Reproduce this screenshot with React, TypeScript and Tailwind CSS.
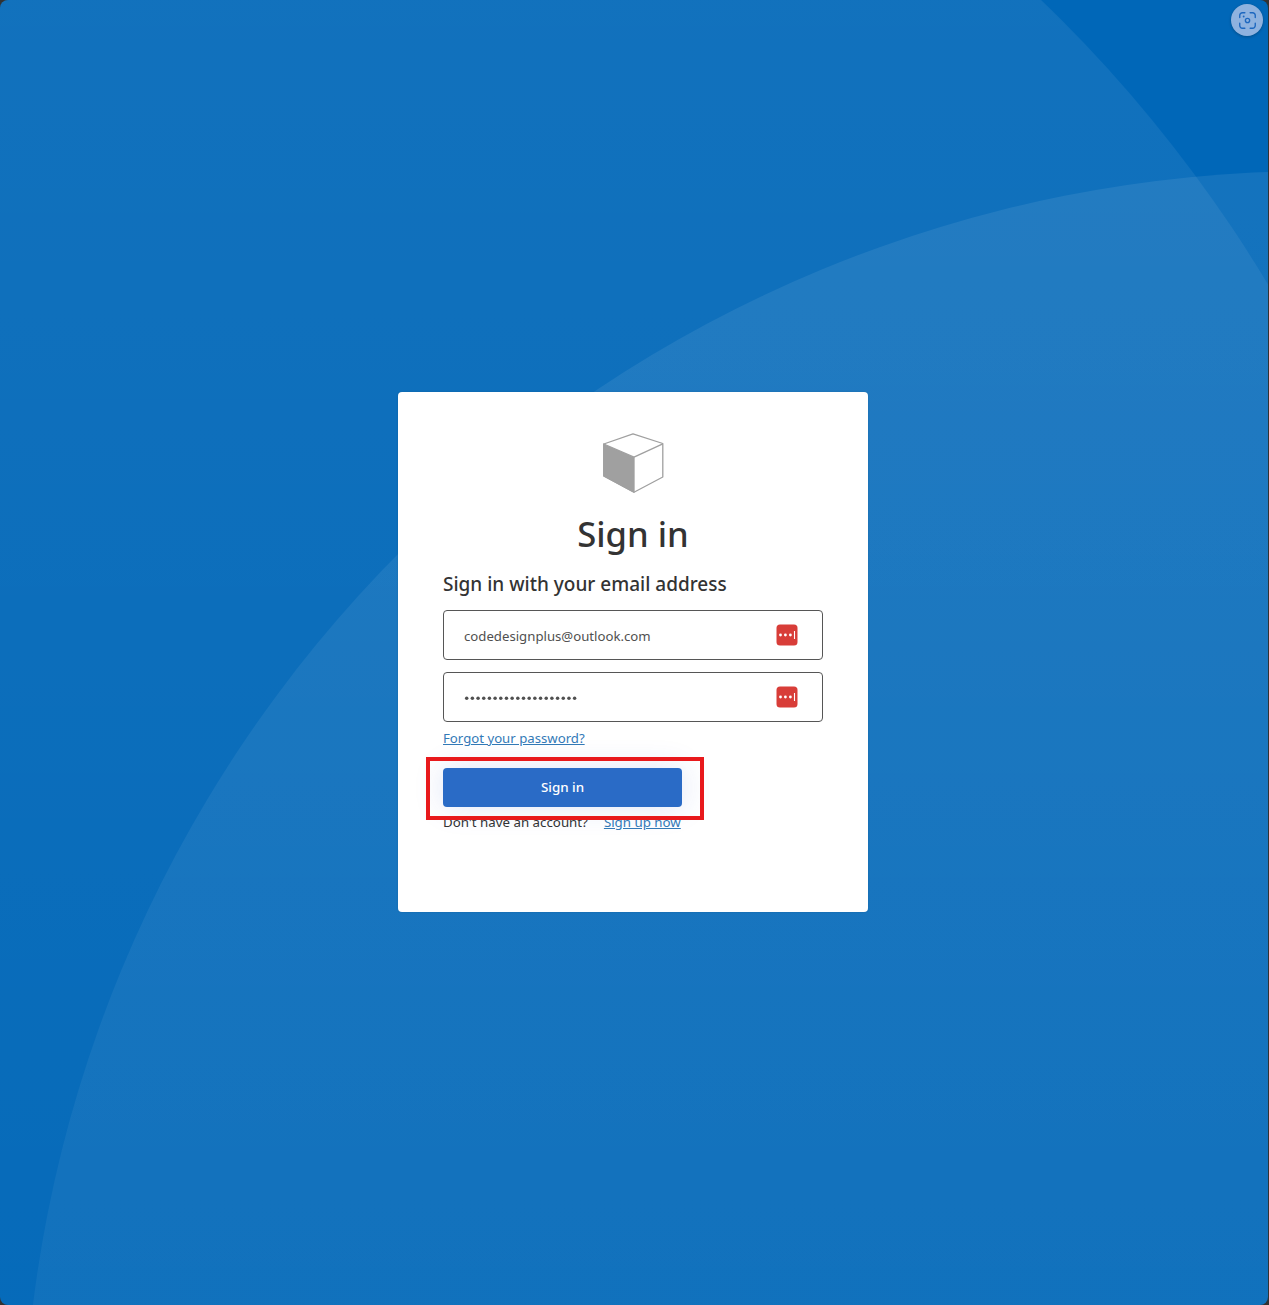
import type { ReactNode } from 'react';

function Backdrop() {
  return (
    <svg className="absolute inset-0 h-full w-full" viewBox="0 0 1268 1305" preserveAspectRatio="none" aria-hidden="true">
      <defs>
        <linearGradient id="upper" x1="0" y1="0" x2="0" y2="1305" gradientUnits="userSpaceOnUse">
          <stop offset="0" stopColor="#fff" stopOpacity="0.07" />
          <stop offset="1" stopColor="#fff" stopOpacity="0.024" />
        </linearGradient>
        <linearGradient id="lower" x1="0" y1="172" x2="0" y2="1305" gradientUnits="userSpaceOnUse">
          <stop offset="0" stopColor="#fff" stopOpacity="0.08" />
          <stop offset="1" stopColor="#fff" stopOpacity="0.045" />
        </linearGradient>
      </defs>
      <rect width="1268" height="1305" fill="#0067b8" />
      <circle cx="93" cy="989" r="1370" fill="url(#upper)" />
      <circle cx="1317" cy="1465" r="1294" fill="url(#lower)" />
    </svg>
  );
}

function Cube() {
  return (
    <svg className="mx-auto block h-[62px] w-[62px]" viewBox="0 0 62 62" fill="none" stroke="#a0a0a0" strokeWidth="1.3" strokeLinejoin="round">
      <path d="M1.8 12 31 1.8 60.8 11.5 V45 L32 60.2 1.8 44Z" />
      <path d="M1.8 12 32 25.2 V60.2 L1.8 44Z" fill="#a0a0a0" />
      <path d="M32 25.2 60.8 11.8" />
    </svg>
  );
}

function FillBadge() {
  return (
    <svg className="mr-6 h-[22px] w-[22px] shrink-0" viewBox="0 0 22 22">
      <rect x="0.5" y="0.5" width="21" height="21" rx="3.5" fill="#d83d38" />
      <circle cx="4.5" cy="11" r="1.4" fill="#fff" />
      <circle cx="9.4" cy="11" r="1.4" fill="#fff" />
      <circle cx="14.4" cy="11" r="1.4" fill="#fff" />
      <path d="M18.5 7v8" stroke="#fff" strokeWidth="1.1" />
    </svg>
  );
}

function Field({ children }: { children: ReactNode }) {
  return (
    <div className="flex h-[50px] items-center justify-between rounded-[4px] border border-[#565656] pl-5 text-[#505050]">
      {children}
      <FillBadge />
    </div>
  );
}

function CaptureButton() {
  return (
    <button className="absolute top-1 right-[5px] flex h-8 w-8 items-center justify-center rounded-full bg-[#8eb2df] shadow-[0_1px_3px_rgba(0,0,0,0.25)]">
      <svg className="h-[17px] w-[17px]" viewBox="0 0 16 16" fill="none" stroke="#1c67bf" strokeWidth="1.3" strokeLinecap="round">
        <path d="M0.7 5.2V3.2A2.5 2.5 0 0 1 3.2.7h2.3M10.5.7h2.3a2.5 2.5 0 0 1 2.5 2.5v2M15.3 10.5v2.3a2.5 2.5 0 0 1-2.5 2.5h-2.3M5.5 15.3H3.2a2.5 2.5 0 0 1-2.5-2.5v-2.3" />
        <circle cx="8" cy="8" r="2" />
        <circle cx="4.4" cy="4.2" r="0.9" fill="#1c67bf" stroke="none" />
      </svg>
    </button>
  );
}

export default function App() {
  return (
    <div className="h-[1305px] w-full bg-[#323232] pr-px">
      <main className="relative flex h-full items-start justify-center overflow-hidden rounded-[8px] pt-[392px] pr-0.5 font-['Noto_Sans','Open_Sans',sans-serif]">
        <Backdrop />
        <section className="relative h-[520px] w-[470px] rounded-[4px] bg-white px-[45px] pt-10 text-[13.2px] leading-[18px] shadow-[0_0_2px_rgba(0,0,0,0.15)]">
          <Cube />
          <h1 className="mt-4 text-center text-[34.6px] leading-[48px] font-medium text-[#333]">Sign in</h1>
          <h2 className="mt-[13px] text-[19px] leading-[26px] font-medium whitespace-nowrap text-[#333]">
            Sign in with your email address
          </h2>
          <div className="mt-[13px] flex flex-col gap-3">
            <Field><span className="pt-px">codedesignplus@outlook.com</span></Field>
            <Field>
              <svg className="h-4 w-[114px]" viewBox="0 0 114 16" fill="#505050">
                {Array.from({ length: 20 }, (_, i) => (
                  <circle key={i} cx={2.7 + i * 5.68} cy="9.3" r="1.75" />
                ))}
              </svg>
            </Field>
          </div>
          <a className="mt-[7px] block w-fit text-[#337ab7] underline">Forgot your password?</a>
          <div className="relative mt-[21px] w-[239px]">
            <button className="block h-[39px] w-full rounded-[4px] bg-[#2a6bc6] pb-0.5 text-center text-[13.4px] font-medium text-white shadow-[0_0_30px_rgba(42,80,198,0.15)]">
              Sign in
            </button>
            <div className="pointer-events-none absolute -top-[11px] -left-[17px] z-10 h-[63px] w-[278px] border-4 border-[#e8191c]" />
          </div>
          <p className="mt-[6px] flex gap-4 text-[13.3px] whitespace-nowrap text-[#333]">
            <span>Don't have an account?</span>
            <a className="text-[#337ab7] underline">Sign up now</a>
          </p>
        </section>
        <CaptureButton />
      </main>
    </div>
  );
}
